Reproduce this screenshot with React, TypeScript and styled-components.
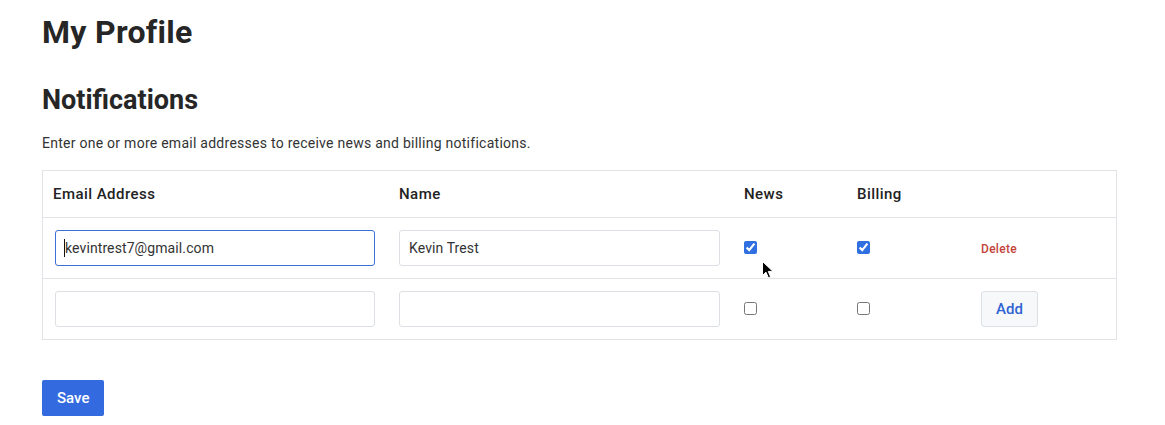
import styled, { createGlobalStyle } from "styled-components";

const GlobalStyle = createGlobalStyle`
  body {
    margin: 0;
    background: #ffffff;
    font-family: Roboto, "Liberation Sans", Arial, sans-serif;
    color: #2b2b2b;
  }
`;

const Page = styled.main`
  position: relative;
  width: 1075px;
  padding: 13px 48px 0 42px;
`;

const Title = styled.h1`
  margin: 0;
  font-size: 32px;
  line-height: 1.2;
  font-weight: 700;
  letter-spacing: 0.3px;
  color: #262626;
`;

const Subtitle = styled.h2`
  margin: 33px 0 0;
  font-size: 27px;
  line-height: 1.2;
  font-weight: 700;
  letter-spacing: 0;
  color: #262626;
`;

const Lead = styled.p`
  margin: 16px 0 16px;
  font-size: 14px;
  line-height: 21px;
  letter-spacing: 0.26px;
  color: #333333;
`;

const Table = styled.table`
  width: 100%;
  table-layout: fixed;
  border-collapse: collapse;
  border: 1px solid #e2e3e6;
`;

// first column header sits 2px further left than the inputs below it
const HeadCell = styled.th<{ $w?: number; $first?: boolean }>`
  width: ${(p) => (p.$w ? `${p.$w}px` : "auto")};
  padding: 12px 12px 12px ${(p) => (p.$first ? 10 : 12)}px;
  text-align: left;
  font-size: 15px;
  line-height: 22px;
  font-weight: 500;
  letter-spacing: 0.45px;
  color: #222222;
`;

const Row = styled.tr`
  border-top: 1px solid #e2e3e6;
`;

const Cell = styled.td`
  padding: 12px;
  vertical-align: middle;
`;

const FieldWrap = styled.div`
  position: relative;
`;

const Field = styled.input<{ $focused?: boolean }>`
  box-sizing: border-box;
  display: block;
  width: 100%;
  height: 36px;
  padding: 0 9px;
  border: 1px solid ${(p) => (p.$focused ? "#3a6fd8" : "#dcdfe3")};
  border-radius: 3px;
  font-family: inherit;
  font-size: 14px;
  letter-spacing: 0.1px;
  color: #333333;
  background: #ffffff;
  outline: none;
`;

const Caret = styled.span`
  position: absolute;
  left: 9px;
  top: 9px;
  width: 1px;
  height: 18px;
  background: #111111;
`;

const Check = styled.input.attrs({ type: "checkbox" })`
  display: block;
  margin: 0;
  width: 13px;
  height: 13px;
  accent-color: #2f6fe0;
`;

const DeleteLink = styled.button`
  padding: 0;
  border: 0;
  background: none;
  font-family: inherit;
  font-size: 12px;
  font-weight: 500;
  letter-spacing: 0.3px;
  color: #c2433a;
  cursor: pointer;
`;

const AddButton = styled.button`
  height: 36px;
  padding: 0 14px;
  border: 1px solid #dde1e6;
  border-radius: 3px;
  background: #f6f8fa;
  font-family: inherit;
  font-size: 15px;
  font-weight: 500;
  color: #2f63d2;
  cursor: pointer;
`;

const SaveButton = styled.button`
  margin-top: 40px;
  height: 36px;
  padding: 0 15px;
  border: 0;
  border-radius: 2px;
  background: #346ae0;
  font-family: inherit;
  font-size: 15px;
  font-weight: 500;
  color: #ffffff;
  cursor: pointer;
`;

const Pointer = styled.svg`
  position: absolute;
  left: 762px;
  top: 261px;
  pointer-events: none;
`;

const App = () => {
  return (
    <>
      <GlobalStyle />
      <Page>
        <Title>My Profile</Title>
        <Subtitle>Notifications</Subtitle>
        <Lead>Enter one or more email addresses to receive news and billing notifications.</Lead>
        <Table>
          <thead>
            <tr>
              <HeadCell $w={322} $first>Email Address</HeadCell>
              <HeadCell $w={321}>Name</HeadCell>
              <HeadCell $w={89}>News</HeadCell>
              <HeadCell $w={100}>Billing</HeadCell>
              <HeadCell />
            </tr>
          </thead>
          <tbody>
            <Row>
              <Cell>
                <FieldWrap>
                  <Field $focused defaultValue="kevintrest7@gmail.com" />
                  <Caret />
                </FieldWrap>
              </Cell>
              <Cell>
                <Field defaultValue="Kevin Trest" />
              </Cell>
              <Cell>
                <Check defaultChecked />
              </Cell>
              <Cell>
                <Check defaultChecked />
              </Cell>
              <Cell>
                <DeleteLink type="button">Delete</DeleteLink>
              </Cell>
            </Row>
            <Row>
              <Cell>
                <Field />
              </Cell>
              <Cell>
                <Field />
              </Cell>
              <Cell>
                <Check />
              </Cell>
              <Cell>
                <Check />
              </Cell>
              <Cell>
                <AddButton type="button">Add</AddButton>
              </Cell>
            </Row>
          </tbody>
        </Table>
        <SaveButton type="button">Save</SaveButton>
        <Pointer width="12" height="18" viewBox="0 0 12 18">
          <path d="M0.5 0.5 L0.5 14.5 L4 11.2 L6.4 16.8 L8.6 15.9 L6.3 10.4 L11 10.4 Z" fill="#000" stroke="#fff" strokeWidth="1" />
        </Pointer>
      </Page>
    </>
  );
};

export default App;
